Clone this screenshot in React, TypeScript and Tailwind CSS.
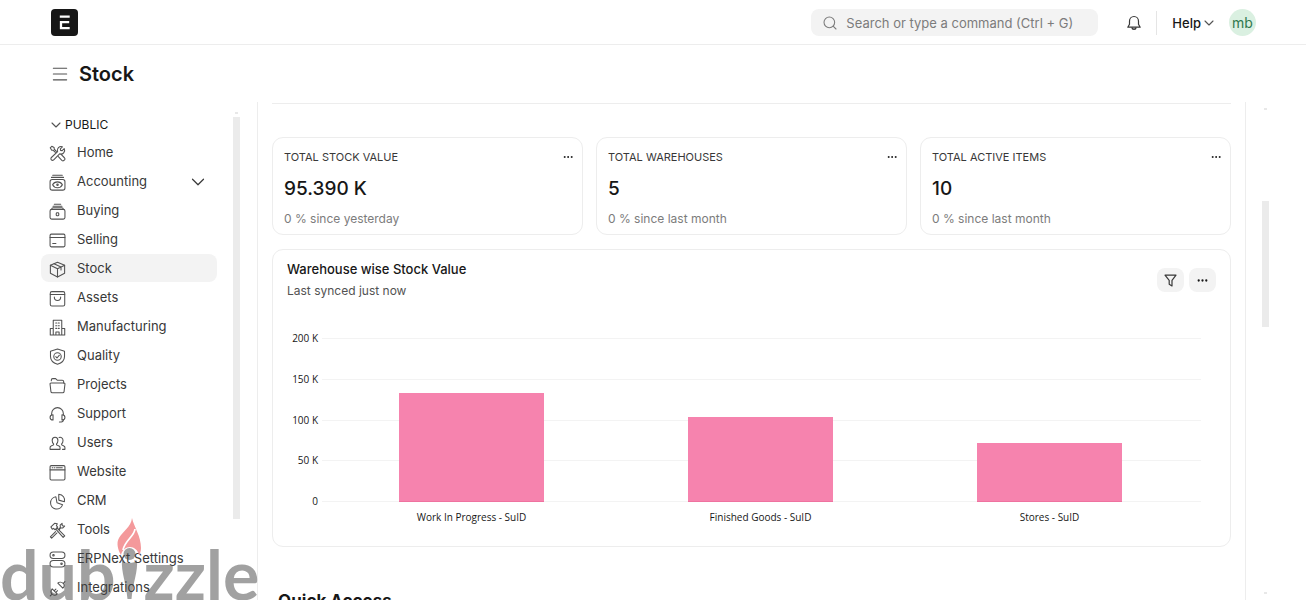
import type { ReactNode } from "react";
import { ChevronDown, Ellipsis, Menu, Search } from "lucide-react";

interface NavItem {
  label: string;
  icon: ReactNode;
  expandable?: boolean;
}

interface NumberCard {
  title: string;
  value: string;
  change: string;
}

interface Bar {
  label: string;
  value: number;
}

const navItems: NavItem[] = [
  {
    label: "Home",
    icon: (
      <>
        <path d="M1.2 2.6 2.6 1.2l2.2 1.2.2 1.6 2 2M1.2 2.6l1.2 2.2L4 5l2 2" />
        <path d="M14.3 3.4 12.4 5.3l-1.5-.2-.2-1.5 1.9-1.9a3.5 3.5 0 0 0-4.5 4.5L2 12a1.6 1.6 0 0 0 2.2 2.2L10 8.3a3.5 3.5 0 0 0 4.3-4.9z" />
        <path d="m8.8 11 3.3 3.4a1.7 1.7 0 0 0 2.4-2.4L11.2 8.7" />
      </>
    ),
  },
  {
    label: "Accounting",
    expandable: true,
    icon: (
      <>
        <path d="M3.5 1.2h9M2.3 3.2h11.4" />
        <rect x="1" y="5.2" width="14" height="10" rx="2" />
        <path d="M3.4 10.2C4.4 8.2 6.2 7.4 8 7.4s3.6.8 4.6 2.8c-1 2-2.8 2.8-4.6 2.8s-3.6-.8-4.6-2.8z" />
        <circle cx="8" cy="10.2" r=".7" />
      </>
    ),
  },
  {
    label: "Buying",
    icon: (
      <>
        <path d="M5 1.2h6M3.8 3h8.4M2.6 6v-.3C2.6 4.9 3.2 4.5 4 4.5h8c.8 0 1.4.4 1.4 1.2V6" />
        <rect x="1" y="6" width="14" height="9.2" rx="1.5" />
        <rect x="6.8" y="9.2" width="2.4" height="2.8" rx=".8" />
      </>
    ),
  },
  {
    label: "Selling",
    icon: (
      <>
        <rect x="1" y="2" width="14" height="12" rx="1.2" />
        <path d="M1 5.2h14M3.5 10.8h3" />
      </>
    ),
  },
  {
    label: "Stock",
    icon: (
      <>
        <path d="M8 1.2 14.7 4v7.6L8 15l-6.7-3.4V4z" />
        <path d="M1.3 4 8 7.2 14.7 4M8 7.2V15M4.7 2.6l6.6 3v2.8" />
      </>
    ),
  },
  {
    label: "Assets",
    icon: (
      <>
        <rect x="1.2" y="1.5" width="13.6" height="13.6" rx="1.5" />
        <path d="M1.2 4.2h13.6M5 6.7c0 1.9 1.3 3.2 3 3.2s3-1.3 3-3.2" />
      </>
    ),
  },
  {
    label: "Manufacturing",
    icon: (
      <>
        <path d="M4 15V1.2h8V15M4 9H1.2v6h13.6V9H12M6.5 15v-2.8h3V15" />
        <path d="M6.3 3.8h1M8.7 3.8h1M6.3 6.3h1M8.7 6.3h1M6.3 8.8h1M8.7 8.8h1" />
      </>
    ),
  },
  {
    label: "Quality",
    icon: (
      <>
        <path d="M8 1 14.6 3v5c0 3.6-2.6 6.1-6.6 7.3C4 14.1 1.4 11.6 1.4 8V3z" />
        <circle cx="8" cy="8" r="3.5" />
        <path d="M6.3 8.2 7.5 9.4 9.8 6.8" />
      </>
    ),
  },
  {
    label: "Projects",
    icon: (
      <>
        <path d="M2.2 3.5v-.7c0-.8.5-1.3 1.3-1.3h2.7L7.7 3h4.8c.8 0 1.3.5 1.3 1.3v1.4" />
        <path d="M1.9 5.7h12.2c.6 0 1 .5.9 1.1l-.8 6.9c-.1.7-.6 1.2-1.3 1.2H3.1c-.7 0-1.2-.5-1.3-1.2L1 6.8c-.1-.6.3-1.1.9-1.1z" />
      </>
    ),
  },
  {
    label: "Support",
    icon: (
      <>
        <path d="M2.5 8.5V7a5.5 5.5 0 0 1 11 0v1.5" />
        <path d="M3.8 8.3C2.1 8.3 1 9.3 1 10.8s1.1 2.4 2.8 2.4zM12.2 8.3c1.7 0 2.8 1 2.8 2.5s-1.1 2.4-2.8 2.4z" />
        <path d="M13.5 13c0 1.3-.8 2-2 2H9.8" />
      </>
    ),
  },
  {
    label: "Users",
    icon: (
      <>
        <path d="M5.7 2.2C4 2.2 3 3.4 3 5.1c0 1.5.5 2.4 1.3 3.2v1L2 10.3c-.8.3-1 .9-1 1.7v1.5h9.4V12c0-.8-.3-1.4-1-1.7l-2.3-1v-1c.8-.8 1.3-1.7 1.3-3.2 0-1.7-1-2.9-2.7-2.9z" />
        <path d="M9.5 2.4c1.9-.7 3.7.5 3.7 2.7 0 1.5-.5 2.4-1.3 3.2v1l2.1 1c.7.3 1 .9 1 1.7v1.5h-2.3" />
      </>
    ),
  },
  {
    label: "Website",
    icon: (
      <>
        <rect x="1" y="1.5" width="14" height="13.5" rx="1.2" />
        <path d="M1 5.5h14M3 3.5h.6M5 3.5h.6M7 3.5h5.5" />
      </>
    ),
  },
  {
    label: "CRM",
    icon: (
      <>
        <path d="M6.5 3.5a5.8 5.8 0 1 0 6.3 7.5L7.5 9.2z" />
        <path d="M9.2 1.2v5.5l5.3 1.5c.9-3.6-1.4-6.6-5.3-7z" />
      </>
    ),
  },
  {
    label: "Tools",
    icon: (
      <>
        <path d="M1.8 4.6 5.3 1.2l2.5.5-.9 1.8 1.3 1.3-2.5 2.5L4.4 6l-1.3.8z" />
        <path d="m6.4 6.8 6.9 7.7 1.5-1.4L7.4 5.6" />
        <path d="m6.2 9-4.9 4.9 1.2 1.3 5-4.9M9 7l1.700-2-.2-2L12.300 1.300l.2 2.200 2.200.3L13 5.600l-2-.2-1.300 1.900" />
      </>
    ),
  },
  {
    label: "ERPNext Settings",
    icon: (
      <>
        <rect x="1" y="1" width="14" height="6" rx="3" />
        <rect x="1" y="9" width="14" height="6" rx="3" />
        <circle cx="4.2" cy="4" r=".7" />
        <circle cx="11.8" cy="12" r=".7" />
      </>
    ),
  },
  {
    label: "Integrations",
    icon: (
      <>
        <path d="m8.3 3 4.7 4.7c1.700-1.500 1.700-3.300.4-4.500C12 1.900 9.700 1.500 8.300 3zM13.400 3.200 15 1.500" />
        <path d="m3 8.300 4.700 4.700c-1.500 1.700-3.500 1.700-4.700.4-1.300-1.200-1.500-3.300 0-5.100zM2.900 13.400 1.200 15M5 10l1.500-1.500M6.500 11.600 8 10.100" />
      </>
    ),
  },
];

const cards: NumberCard[] = [
  { title: "TOTAL STOCK VALUE", value: "95.390 K", change: "0 % since yesterday" },
  { title: "TOTAL WAREHOUSES", value: "5", change: "0 % since last month" },
  { title: "TOTAL ACTIVE ITEMS", value: "10", change: "0 % since last month" },
];

const ticks = ["200 K", "150 K", "100 K", "50 K", "0"];

const bars: Bar[] = [
  { label: "Work In Progress - SuID", value: 133 },
  { label: "Finished Goods - SuID", value: 104 },
  { label: "Stores - SuID", value: 72 },
];

const Header = () => (
  <header className="flex h-[45px] shrink-0 items-center border-b border-[#ededed] pt-px pr-[50px] pl-[51px]">
    <a href="#" aria-label="Home">
      <svg className="size-[27px]" viewBox="0 0 27 27">
        <rect width="27" height="27" rx="4" fill="#171717" />
        <path
          d="M8.8 7.7h9.9M18.2 13.2H10v6h8.7"
          fill="none"
          stroke="#fff"
          strokeWidth="2.3"
        />
      </svg>
    </a>
    <label className="ml-auto flex h-[27px] w-[287px] items-center gap-2 rounded-lg bg-[#f3f3f3] px-[11px] text-[#7c7c7c]">
      <Search className="size-4" strokeWidth={1.6} />
      <input
        className="min-w-0 flex-1 text-[13px] leading-5 outline-none placeholder:text-[#7c7c7c]"
        placeholder="Search or type a command (Ctrl + G)"
        aria-label="Search"
      />
    </label>
    <button className="ml-7 text-[#383838]" aria-label="Notifications">
      <svg className="size-4" viewBox="0 0 16 16" fill="none" stroke="currentColor" strokeWidth="1.2">
        <path
          d="M3.5 6.2C3.5 3.5 5.4 1.5 8 1.5s4.5 2 4.5 4.7v3.1l1.7 2.9H1.8l1.7-2.9z"
          strokeLinejoin="round"
        />
        <path d="M6 12.5c.1 1.1.9 1.800 2 1.800s1.900-.7 2-1.800" strokeWidth="1.6" />
      </svg>
    </button>
    <div className="ml-[14px] h-6 w-px bg-[#e5e5e5]" />
    <button className="ml-[15px] flex items-center text-[13px] leading-5 font-medium text-[#171717]">
      Help
      <ChevronDown className="size-4 text-[#525252]" strokeWidth={1.6} />
    </button>
    <button className="ml-3 size-[27px] rounded-full bg-[#daf0e1] text-[14px] text-[#30794e]">
      mb
    </button>
  </header>
);

const Sidebar = () => (
  <aside className="box-content flex w-[216px] shrink-0 pl-[41px]">
    <nav className="w-[176px] pt-3">
      <button className="mb-0.5 flex h-[22px] items-center gap-px pl-[7px] text-[12px] text-[#171717]">
        <ChevronDown className="size-4 text-[#525252]" strokeWidth={1.6} />
        PUBLIC
      </button>
      <ul className="flex flex-col gap-px">
        {navItems.map((item) => (
          <li key={item.label}>
            <a
              href="#"
              className={`flex h-7 items-center rounded-lg px-2 pt-0.5 text-[13px] text-[#383838] ${
                item.label === "Stock" ? "bg-[#f3f3f3]" : ""
              }`}
            >
              <svg
                className="mr-[11px] size-[17px] shrink-0"
                viewBox="0 0 16 16"
                fill="none"
                stroke="#525252"
                strokeLinejoin="round"
                strokeLinecap="round"
              >
                {item.icon}
              </svg>
              {item.label}
              {item.expandable && <ChevronDown className="ml-auto size-[22px]" strokeWidth={1.3} />}
            </a>
          </li>
        ))}
      </ul>
    </nav>
    <div className="ml-4 flex w-[7px] flex-col items-center pt-[10px]">
      <div className="h-[2px] w-[3px] bg-[#e8e8e8]" />
      <div className="mt-[3px] h-[402px] w-full bg-[#ebebeb]" />
    </div>
  </aside>
);

const StockChart = () => (
  <section className="rounded-[11px] border border-[#ededed] px-[14px] pt-2 pb-[21px]">
    <div className="flex items-center justify-between">
      <div>
        <h3 className="text-[13px] leading-[22px] font-medium text-[#171717]">
          Warehouse wise Stock Value
        </h3>
        <p className="text-[12px] leading-[22px] text-[#525252]">Last synced just now</p>
      </div>
      <div className="flex gap-[5px]">
        <button
          className="flex h-6 w-[27px] items-center justify-center rounded-lg bg-[#f3f3f3]"
          aria-label="Filter"
        >
          <svg
            className="size-[13px]"
            viewBox="0 0 13 13"
            fill="none"
            stroke="#383838"
            strokeWidth="1.2"
          >
            <path d="M1 1.2h11L8 6.3V12L5.2 10.3v-4z" strokeLinejoin="round" />
          </svg>
        </button>
        <button
          className="flex h-6 w-[27px] items-center justify-center rounded-lg bg-[#f3f3f3]"
          aria-label="Chart options"
        >
          <Ellipsis className="size-[13px]" strokeWidth={2.2} />
        </button>
      </div>
    </div>
    <div className="mt-[29px] flex font-['Open_Sans',sans-serif] text-[10px] text-[#171717]">
      <div className="flex w-[31px] flex-col justify-between text-right leading-[15px]">
        {ticks.map((tick) => (
          <span key={tick}>{tick}</span>
        ))}
      </div>
      <div className="relative my-[7px] mr-[15px] ml-1 h-[164px] flex-1">
        <div className="absolute inset-0 flex flex-col justify-between">
          {ticks.map((tick) => (
            <div key={tick} className="h-px bg-[#f3f3f3]" />
          ))}
        </div>
        <div className="relative flex h-full items-end pr-[7px] pl-[5px]">
          {bars.map((bar) => (
            <div key={bar.label} className="flex h-full flex-1 items-end justify-center">
              <div
                className="w-1/2 border-b border-[#ef729f] bg-[#f683ae]"
                style={{ height: `${bar.value / 2}%` }}
              />
            </div>
          ))}
        </div>
      </div>
    </div>
    <div className="mr-[15px] ml-[35px] flex pr-[7px] pl-[5px] font-['Open_Sans',sans-serif] text-[10px] leading-4 text-[#171717]">
      {bars.map((bar) => (
        <span key={bar.label} className="flex-1 text-center">
          {bar.label}
        </span>
      ))}
    </div>
  </section>
);

const Watermark = () => (
  <div className="pointer-events-none absolute bottom-0 left-0 flex items-end font-['Lato',sans-serif] text-[68px] leading-[52px] font-bold text-[#444]/50">
    <span>dub</span>
    <svg className="h-[82px] w-[28px]" viewBox="0 0 28 82">
      <path
        d="M16 0c2 9 9 18 9 30 0 3-1 6-2 7-1-5-5-8-9-8s-8 3-9 8C2 32 0 25 3 20 7 13 15 9 16 0z"
        fill="#f4999b"
      />
      <path d="M19 11C18 19 9 22 7 32" fill="none" stroke="#fff" strokeWidth="1.8" />
      <circle cx="13.5" cy="36" r="6" fill="currentColor" />
      <path d="M6 42c1 2 4 3 7.500 3s6.500-1 7.500-3c1 12-4 22-5.500 39h-4C10 64 5 54 6 42z" fill="currentColor" />
    </svg>
    <span>zzle</span>
  </div>
);

const App = () => {
  return (
    <div className="relative flex h-screen flex-col overflow-hidden bg-white font-['Inter',sans-serif] text-[#171717]">
      <Header />
      <div className="flex h-[57px] shrink-0 items-center gap-[9px] pl-[50px]">
        <button aria-label="Toggle sidebar">
          <Menu className="size-5 text-[#525252]" strokeWidth={1.3} />
        </button>
        <h1 className="text-[20px] font-semibold">Stock</h1>
      </div>
      <div className="flex min-h-0 flex-1">
        <Sidebar />
        <main className="min-w-0 flex-1 overflow-hidden border-x border-[#ededed] px-[14px] pt-px">
          <hr className="border-[#ededed]" />
          <div className="mt-[33px] grid grid-cols-3 gap-[13px]">
            {cards.map((card) => (
              <section
                key={card.title}
                className="rounded-[11px] border border-[#ededed] pt-2 pr-2 pb-[6px] pl-[11px]"
              >
                <div className="flex items-center justify-between">
                  <h3 className="text-[11px] leading-[22px] text-[#383838]">{card.title}</h3>
                  <button aria-label={`${card.title} options`}>
                    <Ellipsis className="size-3" strokeWidth={2} />
                  </button>
                </div>
                <p className="text-[19px] leading-[42px] font-medium">{card.value}</p>
                <p className="text-[12px] leading-[18px] text-[#7c7c7c]">{card.change}</p>
              </section>
            ))}
          </div>
          <div className="mt-[14px]">
            <StockChart />
          </div>
          <h2 className="mt-[42px] ml-[6px] text-[17px] leading-6 font-bold">Quick Access</h2>
        </main>
        <div className="mr-[37px] ml-4 flex w-[7px] shrink-0 flex-col items-center pt-[6px] pb-[6px]">
          <div className="h-[2px] w-[3px] bg-[#e8e8e8]" />
          <div className="mt-[91px] h-[126px] w-full bg-[#ebebeb]" />
          <div className="mt-auto h-[2px] w-[3px] bg-[#e8e8e8]" />
        </div>
      </div>
      <Watermark />
    </div>
  );
};

export default App;
